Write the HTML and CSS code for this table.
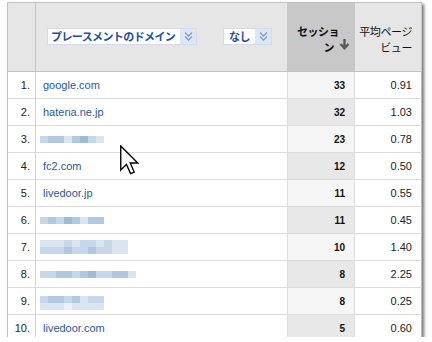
FILE: index.html
```html
<!DOCTYPE html>
<html lang="ja">
<head>
<meta charset="utf-8">
<title>プレースメントのドメイン</title>
<link rel="stylesheet" href="styles.css">
</head>
<body>
<div class="frame">
  <div class="grid">
    <div class="hcell hnum"></div>
    <div class="hcell hdim">
      <div class="dd dd-wide"><span class="dd-label">プレースメントのドメイン</span><span class="dd-btn"><svg width="9" height="11" viewBox="0 0 9 11"><path d="M1 1.5 L4.5 5 L8 1.5 M1 5.5 L4.5 9 L8 5.5" fill="none" stroke="#7d9ec8" stroke-width="1.3"/></svg></span></div>
      <div class="dd dd-narrow"><span class="dd-label">なし</span><span class="dd-btn"><svg width="9" height="11" viewBox="0 0 9 11"><path d="M1 1.5 L4.5 5 L8 1.5 M1 5.5 L4.5 9 L8 5.5" fill="none" stroke="#7d9ec8" stroke-width="1.3"/></svg></span></div>
    </div>
    <div class="hcell hsess">
      <span class="l1">セッショ</span>
      <span class="l2">ン<svg class="sort" width="11" height="11" viewBox="0 0 11 11"><path d="M5.5 0 V9 M1.5 5 L5.5 9.2 L9.5 5" fill="none" stroke="#5b5b5b" stroke-width="2.4"/></svg></span>
    </div>
    <div class="hcell hpv">
      <span>平均ページ</span>
      <span>ビュー</span>
    </div>

    <div class="c num">1.</div><div class="c dom"><a class="lnk">google.com</a></div><div class="c sess odd">33</div><div class="c pv">0.91</div>
    <div class="c num">2.</div><div class="c dom"><a class="lnk">hatena.ne.jp</a></div><div class="c sess even">32</div><div class="c pv">1.03</div>
    <div class="c num">3.</div><div class="c dom"><div class="blur w8"><i class="b2"></i><i class="b3"></i><i class="b3"></i><i class="b1"></i><i class="b3"></i><i class="b4"></i><i class="b2"></i><i class="b1"></i></div></div><div class="c sess odd">23</div><div class="c pv">0.78</div>
    <div class="c num">4.</div><div class="c dom"><a class="lnk">fc2.com</a></div><div class="c sess even">12</div><div class="c pv">0.50</div>
    <div class="c num">5.</div><div class="c dom"><a class="lnk">livedoor.jp</a></div><div class="c sess odd">11</div><div class="c pv">0.55</div>
    <div class="c num">6.</div><div class="c dom"><div class="blur w8"><i class="b2"></i><i class="b3"></i><i class="b2"></i><i class="b4"></i><i class="b3"></i><i class="b1"></i><i class="b3"></i><i class="b3"></i></div></div><div class="c sess even">11</div><div class="c pv">0.45</div>
    <div class="c num">7.</div><div class="c dom"><div class="blur w11"><i class="b1"></i><i class="b1"></i><i class="b1"></i><i class="b2"></i><i class="b1"></i><i class="b2"></i><i class="b2"></i><i class="b1"></i><i class="b2"></i><i class="b1"></i><i class="b1"></i><i class="b2"></i><i class="b2"></i><i class="b2"></i><i class="b3"></i><i class="b2"></i><i class="b2"></i><i class="b3"></i><i class="b2"></i><i class="b2"></i><i class="b1"></i><i class="b1"></i></div></div><div class="c sess odd">10</div><div class="c pv">1.40</div>
    <div class="c num">8.</div><div class="c dom"><div class="blur w12"><i class="b2"></i><i class="b2"></i><i class="b3"></i><i class="b3"></i><i class="b2"></i><i class="b3"></i><i class="b4"></i><i class="b2"></i><i class="b2"></i><i class="b3"></i><i class="b3"></i><i class="b1"></i></div></div><div class="c sess even">8</div><div class="c pv">2.25</div>
    <div class="c num">9.</div><div class="c dom"><div class="blur w8 down"><i class="b2"></i><i class="b3"></i><i class="b3"></i><i class="b2"></i><i class="b3"></i><i class="b1"></i><i class="b2"></i><i class="b2"></i><i class="b1"></i><i class="b1"></i><i class="b1"></i><i class="b0"></i><i class="b1"></i><i class="b1"></i><i class="b1"></i><i class="b1"></i></div></div><div class="c sess odd">8</div><div class="c pv">0.25</div>
    <div class="c num">10.</div><div class="c dom"><a class="lnk">livedoor.com</a></div><div class="c sess even">5</div><div class="c pv">0.60</div>
  </div>
  <svg class="cursor" width="19" height="30" viewBox="0 0 12.6 19.6"><path d="M0.5 0.5 L0.5 16.5 L4.3 12.7 L7 18.8 L9.4 17.8 L6.8 11.8 L11.8 11.8 Z" fill="#fff" stroke="#000" stroke-width="0.9" stroke-linejoin="miter"/></svg>
</div>
</body>
</html>
```
FILE: styles.css
```css
html, body {
  margin: 0;
  padding: 0;
  background: #fff;
}

body {
  font-family: "Liberation Sans", Arial, "Noto Sans CJK JP", sans-serif;
  font-size: 11px;
  color: #222;
}

.frame {
  position: relative;
  margin: 2px 0 0 7px;
  width: 415px;
  height: 335px;
  overflow: hidden;
  box-sizing: border-box;
  border-left: 1px solid #c2c2c2;
  border-top: 1px solid #c2c2c2;
  box-shadow: 2px 2px 3px rgba(0, 0, 0, 0.55);
}

.grid {
  display: grid;
  grid-template-columns: 28px 252px 67px 67px;
  grid-template-rows: 69px;
  grid-auto-rows: 27px;
}

.hcell {
  box-sizing: border-box;
  background: #e6e6e6;
  border-right: 1px solid #c6c6c6;
  border-bottom: 1px solid #c2c2c2;
}

.hdim {
  display: flex;
  align-items: center;
  padding: 0 0 1px 11px;
  gap: 26px;
}

.dd {
  display: flex;
  height: 17px;
  box-sizing: border-box;
  background: #fff;
  border: 1px solid #d3dce8;
}

.dd-wide { width: 150px; }
.dd-narrow { width: 49px; }

.dd-label {
  flex: 1;
  padding-left: 3px;
  font-family: "Noto Sans CJK JP", sans-serif;
  font-weight: bold;
  font-size: 11px;
  letter-spacing: -0.6px;
  line-height: 15px;
  color: #1d4f9d;
  white-space: nowrap;
  overflow: hidden;
}

.dd-narrow .dd-label { padding-left: 5px; }

.dd-btn {
  width: 16px;
  display: flex;
  align-items: center;
  justify-content: center;
  background: #dce7f4;
}

.hsess {
  background: #c8c8c8;
  display: flex;
  flex-direction: column;
  align-items: flex-end;
  justify-content: center;
  padding: 3px 4px 0 0;
  font-family: "Noto Sans CJK JP", sans-serif;
  font-weight: bold;
  font-size: 11px;
  line-height: 16px;
  letter-spacing: -0.5px;
  color: #111;
}

.hsess .l1 { margin-right: 11px; }
.hsess .l2 { display: flex; align-items: center; }
.sort { margin-left: 5px; margin-top: -4px; }

.hpv {
  display: flex;
  flex-direction: column;
  align-items: flex-end;
  justify-content: center;
  padding: 3px 9px 0 0;
  font-family: "Noto Sans CJK JP", sans-serif;
  font-size: 11px;
  line-height: 16px;
  letter-spacing: -0.4px;
  color: #111;
}

.c {
  box-sizing: border-box;
  border-bottom: 1px solid #dcdcdc;
  display: flex;
  align-items: center;
  background: #fff;
}

.num {
  justify-content: flex-end;
  padding-right: 5px;
  border-right: 1px solid #d6d6d6;
  color: #222;
}

.dom {
  padding-left: 7px;
  border-right: 1px solid #dcdcdc;
}

.lnk {
  color: #1f5a9c;
  text-decoration: none;
}

.sess {
  justify-content: flex-end;
  padding-right: 9px;
  font-weight: bold;
  font-size: 10px;
  color: #111;
  border-right: 1px solid #dcdcdc;
}

.sess.odd { background: #f6f6f6; }
.sess.even { background: #e8e8e8; }

.pv {
  justify-content: flex-end;
  padding-right: 9px;
  color: #222;
  border-right: 1px solid #bdbdbd;
}

.blur {
  display: grid;
  grid-auto-rows: 7px;
  margin-left: -3px;
}

.blur.down { margin-top: 4px; }

.w8 { grid-template-columns: repeat(8, 8px); }
.w11 { grid-template-columns: repeat(11, 8px); }
.w12 { grid-template-columns: repeat(12, 8px); }

.blur i { display: block; }
.b0 { background: #edf2f8; }
.b1 { background: #dae5f1; }
.b2 { background: #c5d7ea; }
.b3 { background: #b1c8e1; }
.b4 { background: #9fbbd9; }

.cursor {
  position: absolute;
  left: 112px;
  top: 142px;
}
```
